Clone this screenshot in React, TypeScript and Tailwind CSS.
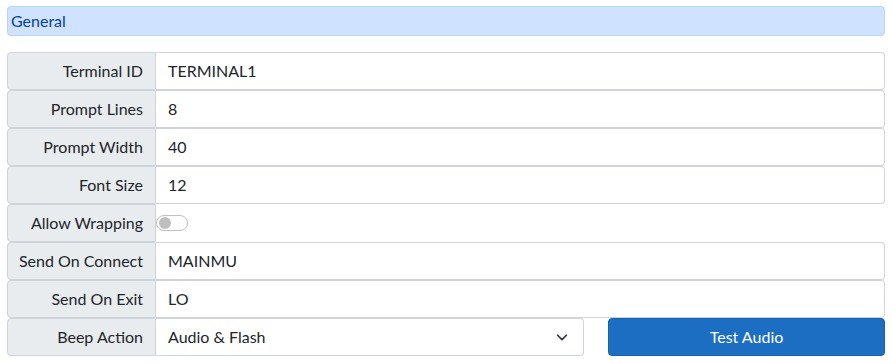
import React from 'react';

const font = { fontFamily: '"Segoe UI", Lato, "Liberation Sans", sans-serif' };

const Label = ({ text }: { text: string }) => (
  <div className="w-[149px] shrink-0 flex items-center justify-end pr-[12px] bg-[#e9ecef] border border-[#ced4da] rounded-l-[4px] text-[#212529]">
    {text}
  </div>
);

const TextRow = ({ label, value }: { label: string; value: string }) => (
  <div className="flex h-[38px]">
    <Label text={label} />
    <div className="flex-1 flex items-center pl-[12px] bg-white border border-l-0 border-[#ced4da] rounded-r-[4px] text-[#212529]">
      {value}
    </div>
  </div>
);

export default function App() {
  const rows = [
    ['Terminal ID', 'TERMINAL1'],
    ['Prompt Lines', '8'],
    ['Prompt Width', '40'],
    ['Font Size', '12'],
  ];
  return (
    <div className="w-[892px] h-[364px] bg-white px-[7px] pt-[6px] text-[16px]" style={font}>
      <div className="h-[30px] w-[878px] flex items-center pl-[3px] bg-[#cfe2ff] border border-[#b6d4fe] rounded-[4px] text-[#084298]">
        General
      </div>
      <div className="mt-[16px] w-[878px] flex flex-col">
        {rows.map(([l, v]) => (
          <TextRow key={l} label={l} value={v} />
        ))}
        <div className="flex h-[38px]">
          <Label text="Allow Wrapping" />
          <div className="flex items-center">
            <div className="w-[32px] h-[16px] rounded-full border border-[#bfbfbf] bg-white flex items-center pl-[2px]">
              <div className="w-[12px] h-[12px] rounded-full bg-[#bfbfbf]" />
            </div>
          </div>
        </div>
        <TextRow label="Send On Connect" value="MAINMU" />
        <TextRow label="Send On Exit" value="LO" />
        <div className="flex h-[38px] gap-[24px]">
          <div className="flex w-[577px]">
            <Label text="Beep Action" />
            <div className="flex-1 flex items-center justify-between pl-[12px] pr-[14px] bg-white border border-l-0 border-[#ced4da] rounded-r-[4px] text-[#212529]">
              <span>Audio &amp; Flash</span>
              <svg width="14" height="14" viewBox="0 0 16 16" fill="none" stroke="#343a40" strokeWidth="2" strokeLinecap="round" strokeLinejoin="round">
                <path d="M3 6l5 5 5-5" />
              </svg>
            </div>
          </div>
          <button className="flex-1 bg-[#1b6ec2] border border-[#1861ac] rounded-[4px] text-white flex items-center justify-center">
            Test Audio
          </button>
        </div>
      </div>
    </div>
  );
}
